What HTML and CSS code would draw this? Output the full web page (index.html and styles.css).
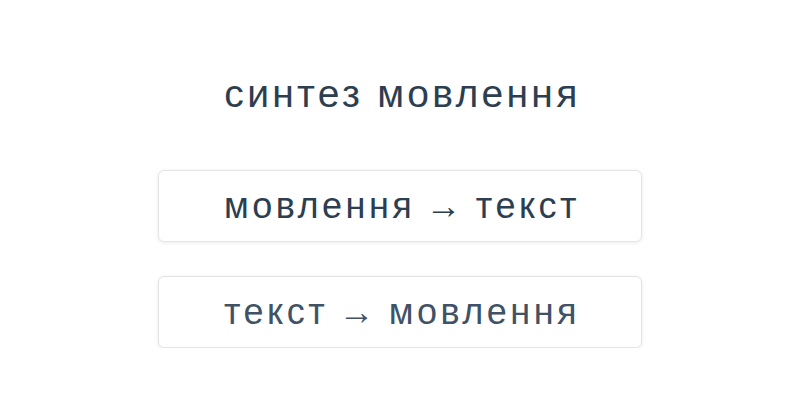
FILE: index.html
```html
<!DOCTYPE html>
<html lang="uk">
<head>
  <meta charset="UTF-8">
  <title>синтез мовлення</title>
  <link rel="stylesheet" href="styles.css">
</head>
<body>
<div class="page">
  <h1 class="title">синтез мовлення</h1>
  <ul class="modes">
    <li><a class="mode" href="#stt">мовлення → текст</a></li>
    <li><a class="mode mode-alt" href="#tts">текст → мовлення</a></li>
  </ul>
</div>
</body>
</html>
```

FILE: styles.css
```css
body, h1, ul, li {
  margin: 0;
  padding: 0;
  list-style: none;
}

body {
  background: #fff;
  font-family: "Liberation Sans", Arial, sans-serif;
  color: #2c3e50;
}

.page {
  display: flex;
  flex-direction: column;
  align-items: center;
  padding-top: 70px;
}

.title {
  font-size: 39px;
  font-weight: 400;
  line-height: 48px;
  letter-spacing: 3.3px;
  text-indent: 5px;
}

.modes {
  display: flex;
  flex-direction: column;
  gap: 34px;
  margin-top: 52px;
}

.mode {
  display: block;
  width: 482px;
  height: 70px;
  line-height: 70px;
  text-align: center;
  text-indent: 4px;
  font-size: 36px;
  letter-spacing: 3.5px;
  word-spacing: -3px;
  color: #2c3e50;
  text-decoration: none;
  background: #fff;
  border: 1px solid #e4e4e4;
  border-radius: 6px;
  box-shadow: 0 1px 4px rgba(0, 0, 0, 0.08);
}

.mode-alt {
  color: #3f5266;
}
```
